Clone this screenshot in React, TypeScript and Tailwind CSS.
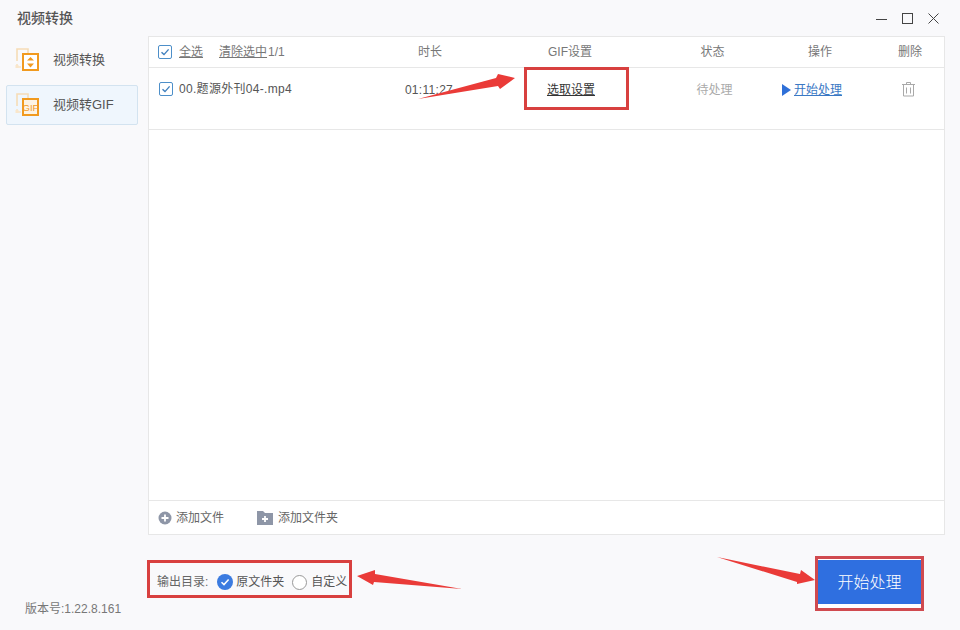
const FONT = "font-['Liberation_Sans','Noto_Sans_CJK_SC',sans-serif]";

function Check({ className = "" }: { className?: string }) {
  return (
    <span className={`flex h-[14px] w-[14px] items-center justify-center rounded-[2px] border border-[#4d8fc9] bg-white ${className}`}>
      <svg width="10" height="10" viewBox="0 0 10 10" fill="none">
        <path d="M1.5 5.2 4 7.6 8.6 2.4" stroke="#3f7fbd" strokeWidth="1.4" />
      </svg>
    </span>
  );
}

function NavIcon({ gif }: { gif?: boolean }) {
  return (
    <svg width="26" height="26" viewBox="0 0 26 26" fill="none" className="shrink-0">
      <path d="M2 14V2h11v4" stroke="#f6dcb6" strokeWidth="1.6" />
      <path d="M2 17v3h4" stroke="#f8e4c6" strokeWidth="1.6" />
      <rect x="0.5" y="18" width="3" height="3" fill="#f9e6ca" />
      <rect x="8" y="7" width="15" height="16" fill={gif ? "#fdf3e3" : "#fff"} stroke="#f19a1f" strokeWidth="2" />
      {gif ? (
        <text x="15.5" y="19" textAnchor="middle" fontSize="9.5" fill="#f19a1f" fontFamily="Liberation Sans, sans-serif">GIF</text>
      ) : (
        <path d="M15.5 10 19 13.6h-7ZM15.5 20.5 12 16.6h7Z" fill="#f19a1f" />
      )}
    </svg>
  );
}

function TrashIcon() {
  return (
    <svg width="15" height="16" viewBox="0 0 15 16" fill="none" stroke="#a9a9a9" strokeWidth="1">
      <path d="M1 3.5h13M5.5 3.5V1.5h4v2M2.5 3.5v11.5h10V3.5M5.5 6.5v6M9.5 6.5v6" />
    </svg>
  );
}

function NavItem({ label, gif, active }: { label: string; gif?: boolean; active?: boolean }) {
  return (
    <div
      className={`flex h-[40px] items-center gap-[12px] rounded-[2px] border pl-[8px] text-[13px] text-[#555] ${
        active ? "border-[#d3e3f0] bg-[#eff6fd]" : "border-transparent"
      }`}
    >
      <NavIcon gif={gif} />
      <span>{label}</span>
    </div>
  );
}

export default function App() {
  return (
    <div className={`relative flex h-[630px] w-[960px] flex-col overflow-hidden bg-[#f9f9fb] ${FONT}`}>
      {/* title bar */}
      <div className="flex h-[36px] shrink-0 items-center justify-between pl-[17px] pr-[21px]">
        <span className="text-[14px] font-medium text-[#555]">视频转换</span>
        <div className="flex items-center gap-[15px] text-[#444]">
          <svg width="11" height="11" viewBox="0 0 11 11" fill="none" stroke="currentColor">
            <path d="M0 6.5h11" />
          </svg>
          <svg width="11" height="11" viewBox="0 0 11 11" fill="none" stroke="currentColor">
            <rect x="0.5" y="0.5" width="10" height="10" />
          </svg>
          <svg width="11" height="11" viewBox="0 0 11 11" fill="none" stroke="currentColor">
            <path d="M0.5 0.5l10 10M10.5 0.5l-10 10" />
          </svg>
        </div>
      </div>

      <div className="flex min-h-0 flex-1">
        {/* sidebar */}
        <aside className="flex w-[148px] shrink-0 flex-col justify-between pb-[12px] pl-[6px] pr-[10px] pt-[4px]">
          <div className="flex flex-col gap-[5px]">
            <NavItem label="视频转换" />
            <NavItem label="视频转GIF" gif active />
          </div>
          <span className="pl-[19px] text-[12px] text-[#777]">版本号:1.22.8.161</span>
        </aside>

        {/* main */}
        <main className="flex min-w-0 flex-1 flex-col">
          <section className="mr-[15px] flex h-[499px] flex-col border border-[#e7e7e7] bg-white text-[12px]">
            <div className="grid h-[31px] shrink-0 grid-cols-[241px_80px_200px_85px_130px_50px] items-center border-b border-[#e7e7e7] text-[#777]">
              <div className="flex items-center pl-[9px]">
                <Check />
                <span className="ml-[7px] underline">全选</span>
                <span className="ml-[16px] underline">清除选中</span>
                <span className="ml-px">1/1</span>
              </div>
              <span className="text-center">时长</span>
              <span className="text-center">GIF设置</span>
              <span className="text-center">状态</span>
              <span className="text-center">操作</span>
              <span className="text-center">删除</span>
            </div>

            <div className="grid h-[62px] shrink-0 grid-cols-[241px_80px_200px_85px_130px_50px] items-start border-b border-[#e7e7e7] pt-[13px]">
              <div className="flex h-[16px] items-center pl-[10px] text-[#555]">
                <Check />
                <span className="ml-[6px] tracking-[0.3px]">00.题源外刊04-.mp4</span>
              </div>
              <span className="flex h-[18px] items-center justify-center pr-[2px] tracking-[0.3px] text-[#555]">01:11:27</span>
              <span className="flex h-[18px] items-center justify-center pl-[2px] text-[#333] underline">选取设置</span>
              <span className="flex h-[18px] items-center justify-center pl-[4px] text-[#aaa]">待处理</span>
              <span className="flex h-[18px] items-center justify-center pr-[16px] text-[#3a78c4]">
                <span className="mr-[3px] h-0 w-0 border-y-[6px] border-l-[9px] border-y-transparent border-l-[#2f70d8]" />
                <span className="underline">开始处理</span>
              </span>
              <span className="flex h-[16px] items-center justify-center pr-[4px]">
                <TrashIcon />
              </span>
            </div>

            <div className="min-h-0 flex-1" />

            <div className="flex h-[34px] shrink-0 items-center border-t border-[#e7e7e7] pl-[9px] text-[#666]">
              <svg width="14" height="14" viewBox="0 0 14 14">
                <circle cx="7" cy="7" r="6.5" fill="#8e96a7" />
                <path d="M7 3.5v7M3.5 7h7" stroke="#fff" strokeWidth="1.8" />
              </svg>
              <span className="ml-[4px]">添加文件</span>
              <svg width="16" height="14" viewBox="0 0 16 14" className="ml-[33px]">
                <path d="M0 0h6l2 2h8v12H0Z" fill="#8e96a7" />
                <path d="M8 5v6M5 8h6" stroke="#fff" strokeWidth="1.8" />
              </svg>
              <span className="ml-[5px]">添加文件夹</span>
            </div>
          </section>

          {/* bottom row */}
          <div className="flex flex-1 items-start justify-between pl-[9px] pr-[39px]">
            <div className="mt-[38px] flex h-[18px] items-center text-[12px] text-[#666]">
              <span>输出目录:</span>
              <span className="ml-[9px] flex h-[16px] w-[16px] items-center justify-center rounded-full bg-[#3b7be0]">
                <svg width="10" height="10" viewBox="0 0 10 10" fill="none">
                  <path d="M1.5 5.2 4 7.6 8.6 2.4" stroke="#fff" strokeWidth="1.5" />
                </svg>
              </span>
              <span className="ml-[3px] text-[#555]">原文件夹</span>
              <span className="ml-[8px] h-[15px] w-[15px] rounded-full border border-[#999] bg-white" />
              <span className="ml-[4px] text-[#555]">自定义</span>
            </div>
            <div className="mt-[24px] h-[49px] w-[103px] bg-white pt-px">
              <button className="h-[44px] w-full bg-[#2f6fe0] pt-px text-[16px] font-light text-white">开始处理</button>
            </div>
          </div>
        </main>
      </div>

      {/* red annotations drawn on top of the screenshot */}
      <div className="absolute left-[524px] top-[67px] h-[43px] w-[105px] border-[3px] border-[#d8403f]" />
      <div className="absolute left-[147px] top-[560px] h-[38px] w-[205px] border-[3px] border-[#d8403f]" />
      <div className="absolute left-[815px] top-[556px] h-[55px] w-[109px] border-[3px] border-[#d04a4f]" />
      <svg className="pointer-events-none absolute left-0 top-0" width="960" height="630" fill="#ea3b38">
        <polygon points="418,99 496,78 498,74 515,78 500,89 498,86" />
        <polygon points="357,576 375,570 375,574 462,589 374,582 373,585" />
        <polygon points="717,557 800,574 801,570 815,580 797,584 797,582" />
      </svg>
    </div>
  );
}
